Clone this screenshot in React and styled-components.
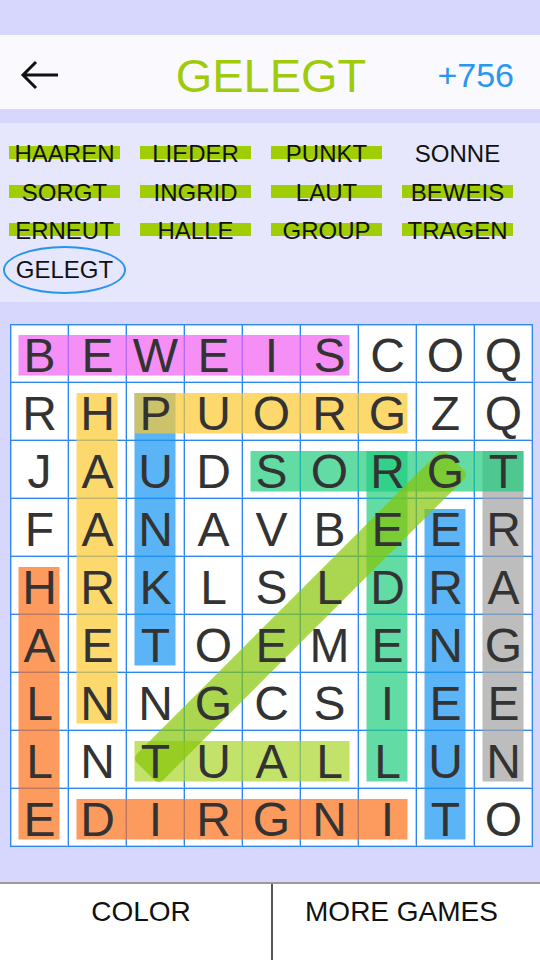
import React from 'react'
import styled, { createGlobalStyle } from 'styled-components'

const GlobalStyle = createGlobalStyle`
  html, body {
    margin: 0;
    padding: 0;
    background: #d7d7fd;
    font-family: 'Liberation Sans', Arial, sans-serif;
  }
  * { box-sizing: border-box; }
`

const CELL = 58

const LETTERS = [
  'BEWEISCOQ',
  'RHPUORGZQ',
  'JAUDSORGT',
  'FANAVBEER',
  'HRKLSLDRA',
  'AETOEMENG',
  'LNNGCSIEE',
  'LNTUALLUN',
  'EDIRGNITO',
]

const WORDS = [
  { text: 'HAAREN', found: true },
  { text: 'LIEDER', found: true },
  { text: 'PUNKT', found: true },
  { text: 'SONNE' },
  { text: 'SORGT', found: true },
  { text: 'INGRID', found: true },
  { text: 'LAUT', found: true },
  { text: 'BEWEIS', found: true },
  { text: 'ERNEUT', found: true },
  { text: 'HALLE', found: true },
  { text: 'GROUP', found: true },
  { text: 'TRAGEN', found: true },
  { text: 'GELEGT', selected: true },
]

// [row1, col1, row2, col2, colour]  (colours are drawn at 0.7 opacity)
const FOUND = [
  [2, 8, 7, 8, 'rgb(161,161,161)'],
  [2, 4, 2, 8, 'rgb(32,204,125)'],
  [2, 6, 7, 6, 'rgb(32,204,125)'],
  [0, 0, 0, 5, 'rgb(242,95,241)'],
  [1, 2, 5, 2, 'rgb(21,148,241)'],
  [1, 2, 1, 6, 'rgb(252,199,45)'],
  [1, 1, 6, 1, 'rgb(252,199,45)'],
  [3, 7, 8, 7, 'rgb(21,148,241)'],
  [4, 0, 8, 0, 'rgb(252,111,25)'],
  [8, 1, 8, 6, 'rgb(252,111,25)'],
  [7, 2, 7, 5, 'rgb(169,214,42)'],
]

const LINE = '#2f88f2'
const LINE_SOFT = 'rgba(60, 140, 240, 0.4)'

const Page = styled.div`
  width: 540px;
  height: 960px;
  padding-top: 35px;
  display: flex;
  flex-direction: column;
  overflow: hidden;
  background: #d7d7fd;
`

const Header = styled.header`
  height: 74px;
  margin-bottom: 14px;
  padding: 6px 26px 0 20px;
  background: #f9f9fe;
  display: grid;
  grid-template-columns: 1fr auto 1fr;
  align-items: center;
`

const BackButton = styled.div`
  display: flex;
  align-items: center;
  width: 40px;
  height: 30px;
`

const Title = styled.h1`
  margin: 0;
  font-size: 47px;
  font-weight: normal;
  color: #9fcb0c;
  line-height: 1;
  padding-left: 8px;
`

const Score = styled.div`
  justify-self: end;
  font-size: 34px;
  color: #2a97ef;
  line-height: 1;
`

const WordPanel = styled.section`
  height: 179px;
  padding: 12px 9px 13px;
  background: #e6e6fd;
  display: grid;
  grid-template-columns: repeat(4, 111px);
  grid-auto-rows: 38.5px;
  column-gap: 20px;
`

const Word = styled.div`
  display: flex;
  align-items: center;
  justify-content: center;
  font-size: 24px;
  color: #111;
  background-image: ${(p) => (p.$found ? 'linear-gradient(#a0cd04, #a0cd04)' : 'none')};
  background-repeat: no-repeat;
  background-size: 100% 13px;
  background-position: 0 11px;
`

const Selected = styled.span`
  flex: none;
  height: 48px;
  padding: 0 11px;
  display: flex;
  align-items: center;
  border: 2.5px solid #2795ec;
  border-radius: 50%;
`

const Board = styled.main`
  flex: 1;
  padding: 22px 0 0 10px;
`

const Grid = styled.div`
  position: relative;
  isolation: isolate;
  width: ${CELL * 9 + 1}px;
  display: grid;
  grid-template-columns: repeat(9, ${CELL}px);
  grid-auto-rows: ${CELL}px;
  background: #fff;
  border-left: 1px solid ${LINE};
  border-top: 1px solid ${LINE};
  box-shadow: inset 1px 1px 0 ${LINE_SOFT};
`

const Cell = styled.div`
  border-right: 1px solid ${LINE};
  border-bottom: 1px solid ${LINE};
  box-shadow: inset -1px -1px 0 ${LINE_SOFT};
  display: flex;
  align-items: center;
  justify-content: center;
  padding-top: 5px;
`

const Letter = styled.span`
  position: relative;
  z-index: 2;
  font-size: 48px;
  line-height: 1;
  color: #333;
`

const Highlights = styled.svg`
  position: absolute;
  left: 0;
  top: 0;
  z-index: 1;
  pointer-events: none;
`

const Footer = styled.footer`
  height: 78px;
  border-top: 2px solid #9a9a9a;
  background: #fff;
  display: grid;
  grid-template-columns: 271px 1fr;
`

const FooterButton = styled.div`
  font-size: 28px;
  line-height: 32px;
  color: #111;
  text-align: center;
  padding: 12px ${(p) => (p.$right ? '10px' : '0')} 0 ${(p) => (p.$right ? '0' : '11px')};
  border-left: ${(p) => (p.$right ? '2px solid #555' : 'none')};
`

const center = (i) => i * CELL + 28.5

function Band({ r1, c1, r2, c2, color }) {
  const x = center(c1) - 21
  const y = center(r1) - 18.5
  return (
    <rect
      x={x}
      y={y}
      width={(c2 - c1) * CELL + 41}
      height={(r2 - r1) * CELL + 40.5}
      fill={color}
      opacity="0.7"
    />
  )
}

function Selection() {
  // GELEGT: from (row 2, col 7) to (row 7, col 2)
  const x1 = center(7)
  const y1 = center(2) + 2
  const x2 = center(2)
  const y2 = center(7) + 2
  const len = Math.hypot(x1 - x2, y1 - y2) + 28
  return (
    <rect
      x={-len / 2}
      y={-18.5}
      width={len}
      height={37}
      rx={6}
      fill="rgb(134,196,5)"
      opacity="0.7"
      transform={`translate(${(x1 + x2) / 2} ${(y1 + y2) / 2}) rotate(-45)`}
    />
  )
}

export default function App() {
  const size = CELL * 9
  return (
    <>
      <GlobalStyle />
      <Page>
        <Header>
          <BackButton>
            <svg width="40" height="30" viewBox="0 0 40 30">
              <path d="M38 15H4M16 2L3 15l13 13" fill="none" stroke="#111" strokeWidth="3" />
            </svg>
          </BackButton>
          <Title>GELEGT</Title>
          <Score>+756</Score>
        </Header>

        <WordPanel>
          {WORDS.map((w) => (
            <Word key={w.text} $found={w.found}>
              {w.selected ? <Selected>{w.text}</Selected> : w.text}
            </Word>
          ))}
        </WordPanel>

        <Board>
          <Grid>
            <Highlights width={size} height={size} viewBox={`0 0 ${size} ${size}`}>
              {FOUND.map(([r1, c1, r2, c2, color], i) => (
                <Band key={i} r1={r1} c1={c1} r2={r2} c2={c2} color={color} />
              ))}
              <Selection />
            </Highlights>
            {LETTERS.map((row, r) =>
              row.split('').map((ch, c) => (
                <Cell key={`${r}-${c}`}>
                  <Letter>{ch}</Letter>
                </Cell>
              ))
            )}
          </Grid>
        </Board>

        <Footer>
          <FooterButton>COLOR</FooterButton>
          <FooterButton $right>MORE GAMES</FooterButton>
        </Footer>
      </Page>
    </>
  )
}
